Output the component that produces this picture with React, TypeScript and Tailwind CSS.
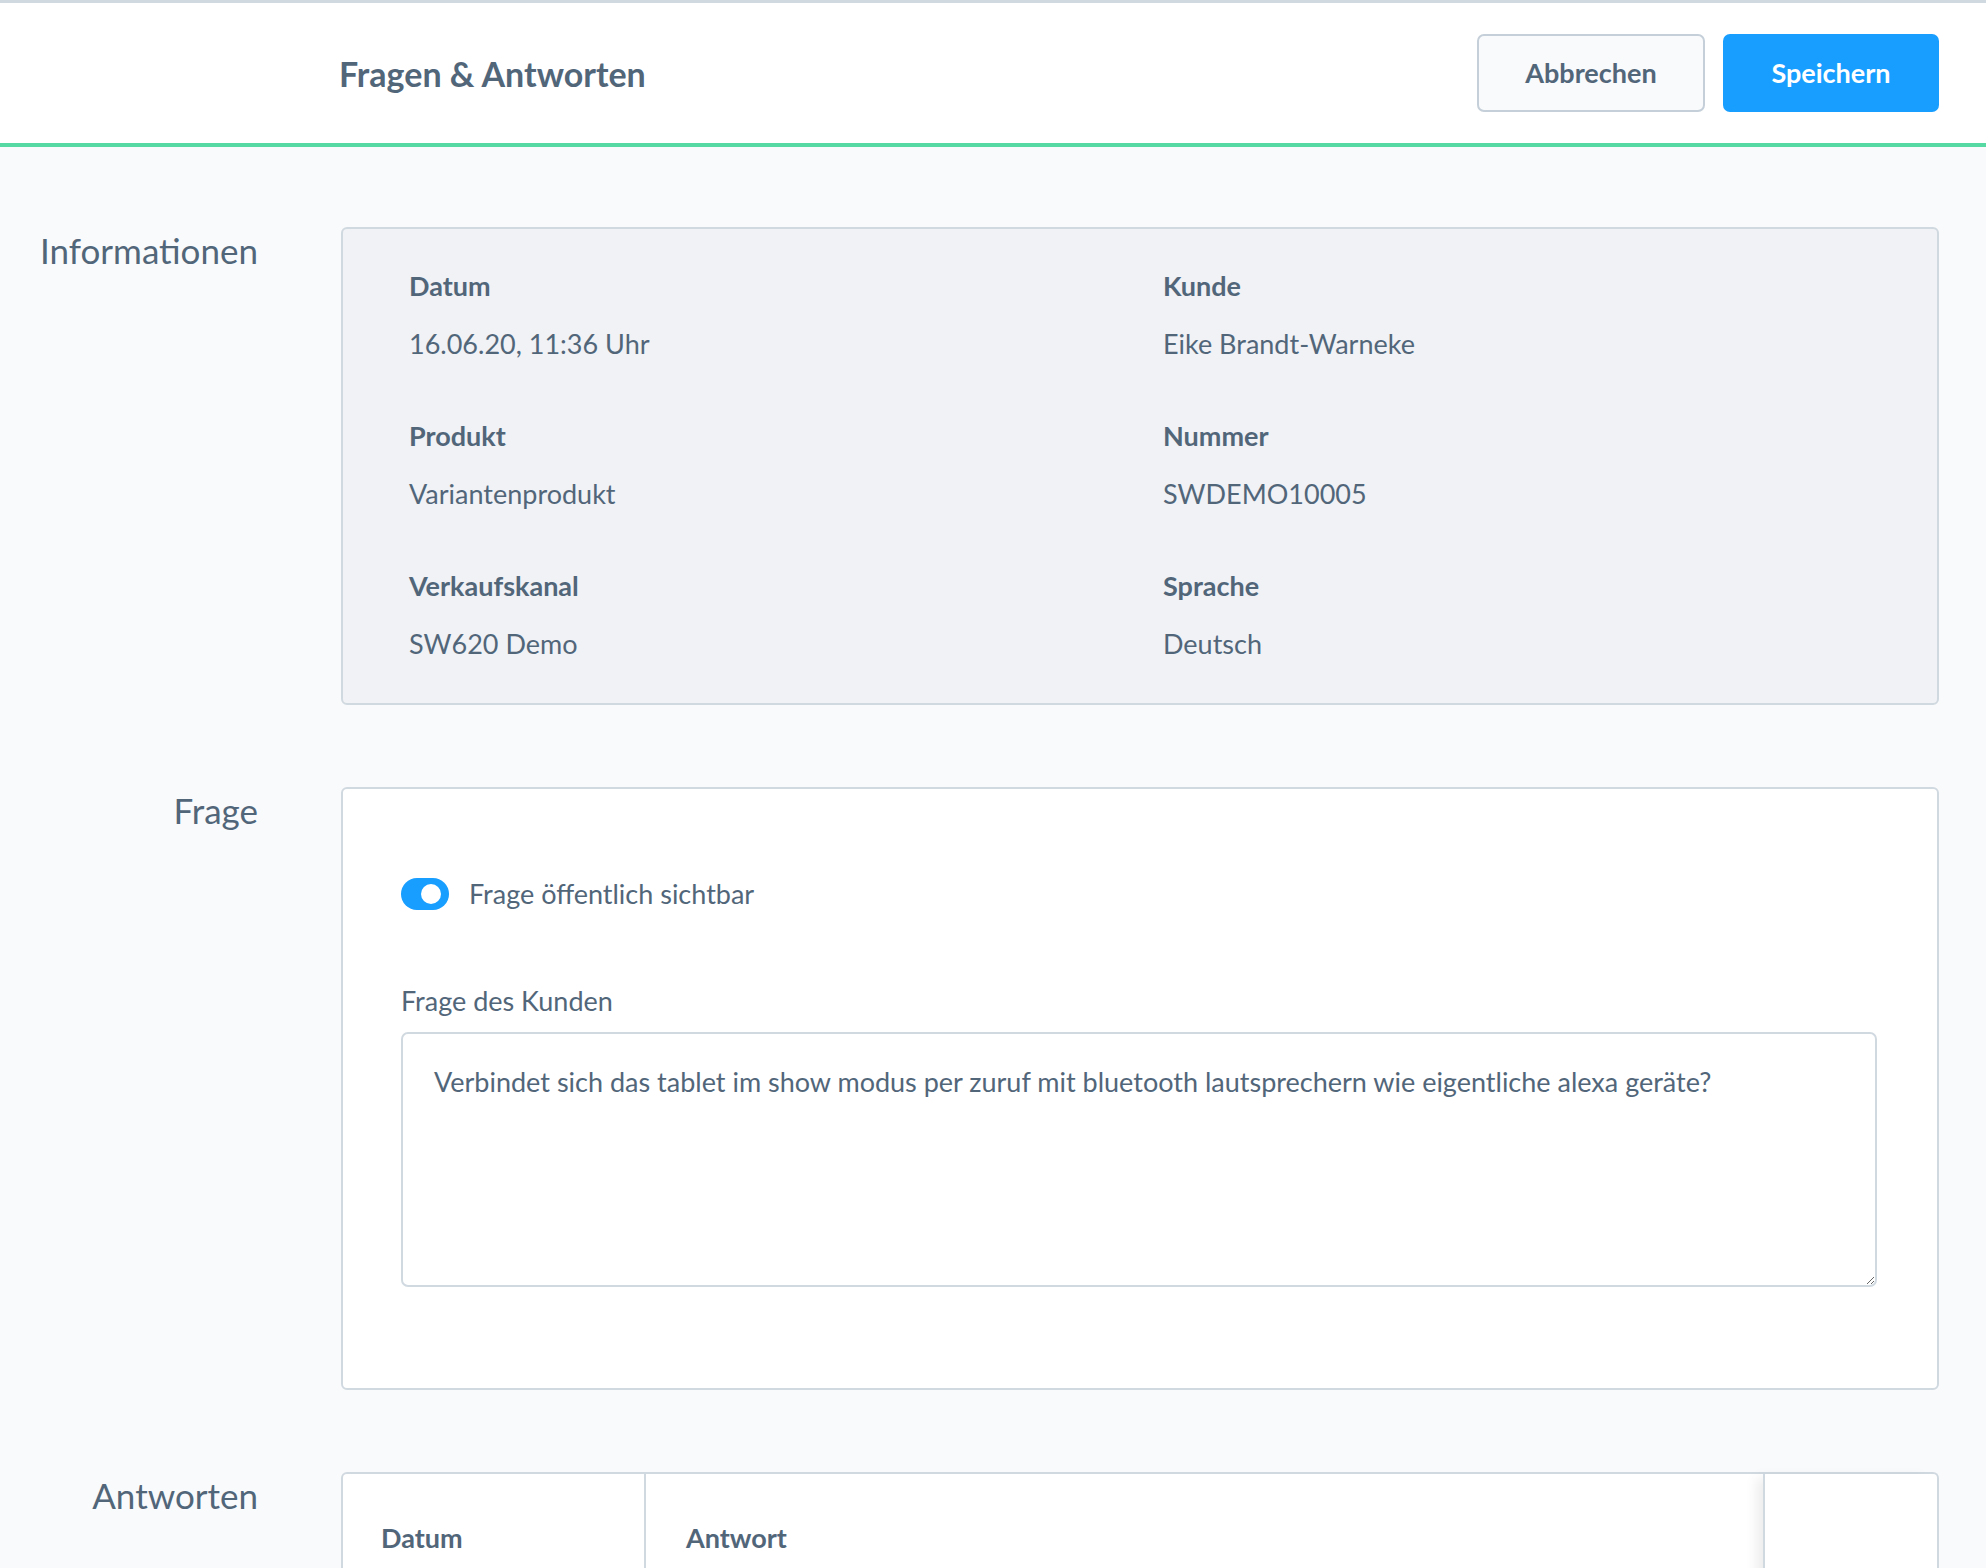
import React from "react";

const font = { fontFamily: "Lato, 'Open Sans', sans-serif" };

function InfoItem({ label, value }: { label: string; value: string }) {
  return (
    <div>
      <p className="text-[27px] leading-[36px] font-bold text-[#52667a]">{label}</p>
      <p className="mt-[22px] text-[27px] leading-[36px] text-[#52667a]">{value}</p>
    </div>
  );
}

function Section({ title, children }: { title: string; children: React.ReactNode }) {
  return (
    <div className="flex gap-[83px] mb-[82px]">
      <h2 className="w-[258px] shrink-0 text-right text-[35px] leading-[46px] text-[#52667a]">
        {title}
      </h2>
      <div className="flex-1 min-w-0">{children}</div>
    </div>
  );
}

export default function App() {
  return (
    <div style={font} className="min-h-screen bg-[#f9fafb] border-t-[3px] border-[#d1d9e0] overflow-hidden">
      {/* Smart bar */}
      <header className="h-[144px] bg-white border-b-4 border-[#57d9a3] flex items-center pl-[339px] pr-[47px]">
        <h1 className="text-[34px] font-bold text-[#52667a] flex-1">Fragen &amp; Antworten</h1>
        <div className="flex gap-[18px]">
          <button className="w-[228px] h-[78px] rounded-[7px] border-2 border-[#c5cfd9] bg-[#f9fafb] text-[27px] font-bold text-[#52667a]">
            Abbrechen
          </button>
          <button className="w-[216px] h-[78px] rounded-[7px] bg-[#189eff] text-[27px] font-bold text-white">
            Speichern
          </button>
        </div>
      </header>

      <main className="pt-[80px] pr-[47px]">
        <Section title="Informationen">
          <div className="rounded-[6px] border-2 border-[#d1d9e0] bg-[#f0f2f5] px-[66px] pt-[39px] pb-[41px]">
            <div className="grid grid-cols-2 gap-x-[46px] gap-y-[56px]">
              <InfoItem label="Datum" value="16.06.20, 11:36 Uhr" />
              <InfoItem label="Kunde" value="Eike Brandt-Warneke" />
              <InfoItem label="Produkt" value="Variantenprodukt" />
              <InfoItem label="Nummer" value="SWDEMO10005" />
              <InfoItem label="Verkaufskanal" value="SW620 Demo" />
              <InfoItem label="Sprache" value="Deutsch" />
            </div>
          </div>
        </Section>

        <Section title="Frage">
          <div className="rounded-[6px] border-2 border-[#d1d9e0] bg-white pl-[58px] pr-[60px] pt-[87px] pb-[101px]">
            <div className="flex items-center gap-[20px] h-[36px]">
              <span className="relative w-[48px] h-[32px] rounded-full bg-[#189eff]">
                <span className="absolute right-[8px] top-[6px] w-[20px] h-[20px] rounded-full bg-white" />
              </span>
              <span className="text-[27px] leading-[36px] text-[#52667a]">Frage öffentlich sichtbar</span>
            </div>
            <p className="mt-[71px] text-[27px] leading-[36px] text-[#52667a]">Frage des Kunden</p>
            <textarea
              readOnly
              defaultValue="Verbindet sich das tablet im show modus per zuruf mit bluetooth lautsprechern wie eigentliche alexa geräte?"
              style={font}
              className="mt-[13px] block w-full h-[255px] rounded-[7px] border-2 border-[#d1d9e0] bg-white px-[31px] pt-[30px] text-[27px] leading-[36px] text-[#52667a] outline-none"
            />
          </div>
        </Section>

        <Section title="Antworten">
          <div className="rounded-t-[6px] border-2 border-b-0 border-[#d1d9e0] bg-white">
            <div className="grid grid-cols-[303px_1fr_174px] h-[260px]">
              <div className="border-r-2 border-[#d1d9e0] pl-[38px] pt-[46px]">
                <span className="text-[27px] leading-[36px] font-bold text-[#52667a]">Datum</span>
              </div>
              <div className="pl-[40px] pt-[46px]">
                <span className="text-[27px] leading-[36px] font-bold text-[#52667a]">Antwort</span>
              </div>
              <div className="border-l-2 border-[#d1d9e0] shadow-[-10px_0_12px_-4px_rgba(0,0,0,0.08)]" />
            </div>
          </div>
        </Section>
      </main>
    </div>
  );
}
